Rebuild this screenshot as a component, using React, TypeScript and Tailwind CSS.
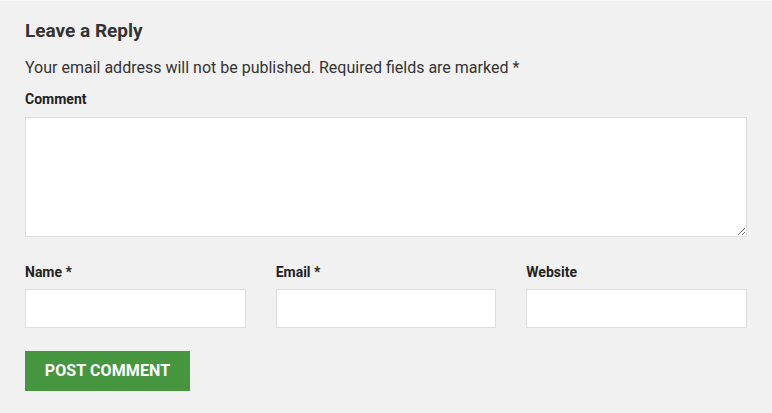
export default function App() {
  return (
    <div className="min-h-[413px] w-[772px] bg-[#f1f1f1] border-t border-[#f7f7f7] px-[25px] pt-[18px] font-['Roboto',sans-serif] text-[#333]">
      <h3 className="text-[19px] font-bold leading-[24px]">Leave a Reply</h3>
      <p className="mt-[13px] text-[16px] leading-[24px]">
        Your email address will not be published. Required fields are marked *
      </p>
      <form onSubmit={(e) => e.preventDefault()}>
        <label className="mt-[9px] block text-[14px] font-bold leading-[20px] text-[#222]">Comment</label>
        <textarea className="mt-[8px] block h-[120px] w-[722px] resize-y border border-[#ddd] bg-white" />

        <div className="mt-[25px] grid grid-cols-3 gap-[30px] w-[722px]">
          {["Name *", "Email *", "Website"].map((label) => (
            <div key={label}>
              <label className="block text-[14px] font-bold leading-[20px] text-[#222]">{label}</label>
              <input className="mt-[7px] block h-[39px] w-full border border-[#ddd] bg-white" />
            </div>
          ))}
        </div>

        <button
          type="submit"
          className="mt-[23px] h-[40px] w-[165px] bg-[#46953f] text-[16px] font-bold uppercase tracking-[0.1px] text-white"
        >
          Post Comment
        </button>
      </form>
    </div>
  );
}
